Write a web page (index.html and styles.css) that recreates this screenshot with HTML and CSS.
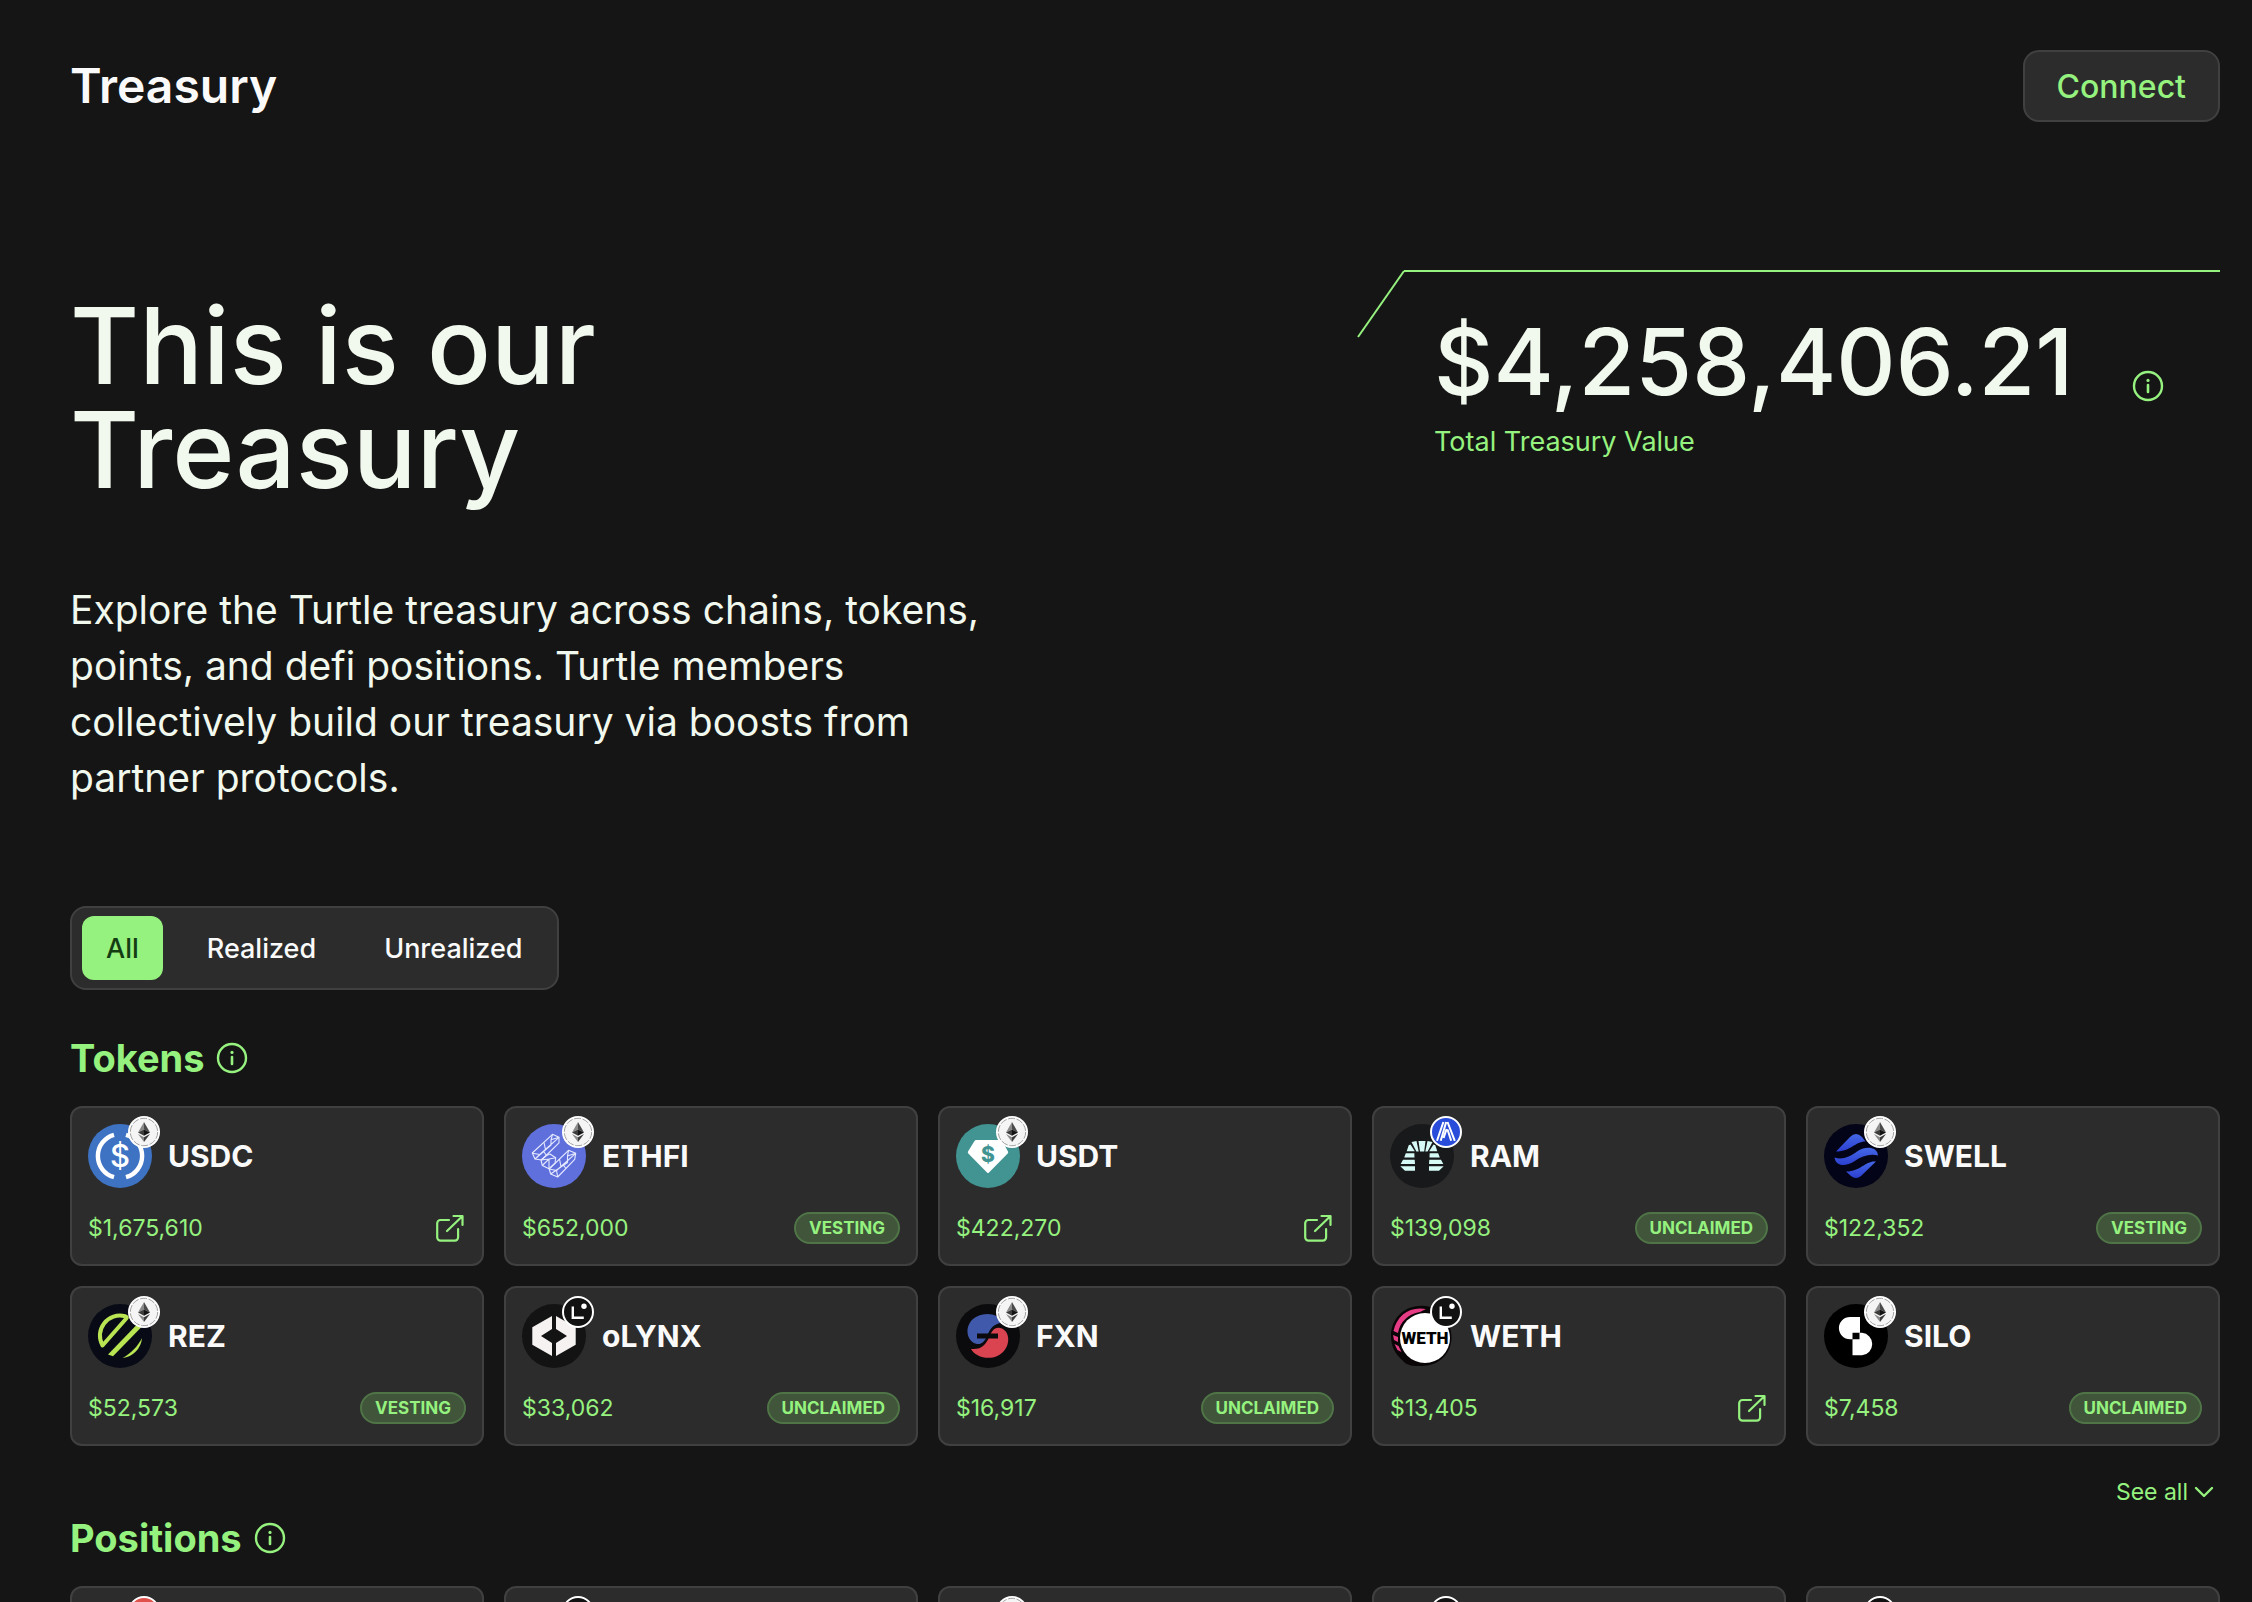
FILE: index.html
```html
<!DOCTYPE html>
<html lang="en">
    <head>
        <meta charset="UTF-8">
        <meta name="viewport" content="width=device-width, initial-scale=1">
        <title>Treasury</title>
        <link rel="stylesheet" href="styles.css">
    </head>
    <body>
        <!-- shared icons -->
        <svg class="sprite" aria-hidden="true">
            <defs>
                <linearGradient id="swell-fill" x1="0" y1="0" x2="0" y2="1">
                    <stop offset="0" stop-color="#4468e6"/>
                    <stop offset="1" stop-color="#2c3fd0"/>
                </linearGradient>
            </defs>
            <symbol id="info" viewBox="0 0 36 36">
                <circle cx="18" cy="18" r="14" fill="none" stroke="currentColor" stroke-width="2.4"/>
                <path d="M18 17v7" stroke="currentColor" stroke-width="2.6" stroke-linecap="round"/>
                <circle cx="18" cy="12.4" r="1.6" fill="currentColor"/>
            </symbol>
            <symbol id="external" viewBox="0 0 32 32">
                <path d="M15 8H6.5A3.3 3.3 0 0 0 3.2 11.3v14a3.3 3.3 0 0 0 3.3 3.3h14.3a3.3 3.3 0 0 0 3.3-3.3V17M13 19 28.3 4.2M19.5 4h9v9" fill="none" stroke="currentColor" stroke-width="2.2" stroke-linecap="round" stroke-linejoin="round"/>
            </symbol>
            <symbol id="chevron" viewBox="0 0 24 24">
                <path d="M4 8l8 8 8-8" fill="none" stroke="currentColor" stroke-width="2.4" stroke-linecap="round" stroke-linejoin="round"/>
            </symbol>
            <!-- chains -->
            <symbol id="eth" viewBox="0 0 32 32">
                <circle cx="16" cy="16" r="16" fill="#fff"/>
                <circle cx="16" cy="16" r="13.7" fill="#f5f5f5" stroke="#8c8c8c" stroke-width=".8" stroke-dasharray="7 1.6"/>
                <path d="M16 6v7.6l-6 2.9z" fill="#8a8a8a"/>
                <path d="M16 6v7.6l6 2.9z" fill="#4a4a4a"/>
                <path d="M16 13.6v6.2l-6-3.3z" fill="#3c3c3b"/>
                <path d="M16 13.6v6.2l6-3.3z" fill="#141414"/>
                <path d="M16 21.2V26l-6-8z" fill="#8a8a8a"/>
                <path d="M16 21.2V26l6-8z" fill="#3c3c3b"/>
            </symbol>
            <symbol id="linea" viewBox="0 0 32 32">
                <circle cx="16" cy="16" r="15" fill="#121212" stroke="#fff" stroke-width="2"/>
                <polyline points="10.8,10.5 10.8,21.8 21.8,21.8" fill="none" stroke="#fff" stroke-width="2.4"/>
                <circle cx="22" cy="10.3" r="2.7" fill="#fff"/>
            </symbol>
            <symbol id="arbitrum" viewBox="0 0 32 32">
                <circle cx="16" cy="16" r="15" fill="#2a4cdb" stroke="#fff" stroke-width="2"/>
                <path d="M13.4 6 7 24.8M16.2 6l-5.5 18.8M16.6 13l-3 9M17.5 6l7.3 18.8M17.5 13.5l3.7 11.3" fill="none" stroke="#fff" stroke-width="2"/>
            </symbol>
            <symbol id="optimism" viewBox="0 0 32 32">
                <circle cx="16" cy="16" r="15" fill="#e0514c" stroke="#fff" stroke-width="2"/>
            </symbol>
        </svg>

        <div class="page">
            <header class="topbar">
                <div class="topbar-title">Treasury</div>
                <button type="button" class="connect">Connect</button>
            </header>

            <section class="hero">
                <div class="intro">
                    <h1>This is our<br>Treasury</h1>
                    <p>Explore the Turtle treasury across chains, tokens, points, and defi positions. Turtle members collectively build our treasury via boosts from partner protocols.</p>
                </div>
                <div class="stats">
                    <svg class="stats-corner" viewBox="0 0 44 68" aria-hidden="true">
                        <path d="M-2 67 44 1" fill="none" stroke="currentColor" stroke-width="2"/>
                    </svg>
                    <div class="stats-body">
                        <div class="stats-row">
                            <div class="stats-value">$4,258,406.21</div>
                            <svg class="info"><use href="#info"/></svg>
                        </div>
                        <div class="stats-label">Total Treasury Value</div>
                    </div>
                </div>
            </section>

            <div class="tabs">
                <button type="button" class="tab on">All</button>
                <button type="button" class="tab">Realized</button>
                <button type="button" class="tab">Unrealized</button>
            </div>

            <section class="group">
                <div class="group-hd">
                    <h2>Tokens</h2>
                    <svg class="info"><use href="#info"/></svg>
                </div>
                <div class="cards">
                    <div class="card">
                        <div class="card-hd">
                            <div class="coin">
                                <svg class="coin-img" viewBox="0 0 64 64">
                                    <circle cx="32" cy="32" r="32" fill="#3e73c4"/>
                                    <path d="M26 10.8a22 22 0 0 0 0 42.400M38 10.8a22 22 0 0 1 0 42.400" fill="none" stroke="#fff" stroke-width="4.400"/>
                                    <text x="32" y="43" class="coin-sign" font-size="31" fill="#fff">$</text>
                                </svg>
                                <svg class="chain"><use href="#eth"/></svg>
                            </div>
                            <h3>USDC</h3>
                        </div>
                        <div class="card-ft">
                            <span class="amount">$1,675,610</span>
                            <a href="#" class="external" aria-label="Open USDC"><svg><use href="#external"/></svg></a>
                        </div>
                    </div>
                    <div class="card">
                        <div class="card-hd">
                            <div class="coin">
                                <svg class="coin-img" viewBox="0 0 64 64">
                                    <circle cx="32" cy="32" r="32" fill="#5f70dd"/>
                                    <g fill="none" stroke="#e6eaff" stroke-width="1.1" stroke-linejoin="round">
                                        <path d="M30.5 10.3l6.500 3v5.500L19.500 36l-6.500-1-2.700-6z"/>
                                        <path d="M30.500 10.300l-1.500 5.500 8-2.500M29 15.800V21L13 35M10.300 29.300l7.500 1.200L37 13.300M17.800 30.500L13 35M22 18.500l1.500 7M22 28l2.500 3.500"/>
                                        <path d="M24.500 31.500L28 30l5.700 3.700-.7 5.500-6 5.500-6.700-3.200L19 36z"/>
                                        <path d="M19 36l8-1 6.700-1.300M27 35v9.700M20.300 41.500L27 35"/>
                                        <path d="M46.500 26.300l7.200 3-1 6L35.700 53l-7-3-1.500-5z"/>
                                        <path d="M46.500 26.300L45.500 32l8.200-2.700M45.500 32v6.500L28.700 50M27.200 45l7.300 1.500L53.700 29.300M34.500 46.500l1.200 6.500M37.500 35l1.500 8M41 40.500l3 4"/>
                                    </g>
                                </svg>
                                <svg class="chain"><use href="#eth"/></svg>
                            </div>
                            <h3>ETHFI</h3>
                        </div>
                        <div class="card-ft">
                            <span class="amount">$652,000</span>
                            <span class="tag">VESTING</span>
                        </div>
                    </div>
                    <div class="card">
                        <div class="card-hd">
                            <div class="coin">
                                <svg class="coin-img" viewBox="0 0 64 64">
                                    <circle cx="32" cy="32" r="32" fill="#429492"/>
                                    <path d="M20.5 16h24a2 2 0 0 1 1.700 1L52 27.600a1.500 1.500 0 0 1-.3 1.800L33 48.500a1.400 1.400 0 0 1-2 0L12.300 29.400a1.500 1.500 0 0 1-.3-1.800L18.500 17a2 2 0 0 1 2-1z" fill="#fff"/>
                                    <text x="32" y="38" class="coin-sign coin-bold" font-size="21" fill="#429492">$</text>
                                </svg>
                                <svg class="chain"><use href="#eth"/></svg>
                            </div>
                            <h3>USDT</h3>
                        </div>
                        <div class="card-ft">
                            <span class="amount">$422,270</span>
                            <a href="#" class="external" aria-label="Open USDT"><svg><use href="#external"/></svg></a>
                        </div>
                    </div>
                    <div class="card">
                        <div class="card-hd">
                            <div class="coin">
                                <svg class="coin-img" viewBox="0 0 64 64">
                                    <circle cx="32" cy="32" r="32" fill="#17191a"/>
                                    <g fill="#d6faf6">
                                        <path d="M28.500 17h7l-1.300 10.500H30z"/>
                                        <path d="M21.500 18l5-1 2.200 10.500h-2.300zM16.700 27.300l2-6 1.800-.8 4.300 6.800zM14.200 33.500l1.600-4.200h8.500l.2 4.200zM10.700 40l2.300-4.300h11.700l.3 4.300zM10.300 42.200H25v4.500H15z"/>
                                        <path transform="matrix(-1 0 0 1 64 0)" d="M21.500 18l5-1 2.200 10.500h-2.300zM16.700 27.300l2-6 1.800-.8 4.300 6.800zM14.200 33.500l1.600-4.200h8.500l.2 4.200zM10.700 40l2.300-4.300h11.700l.3 4.300zM10.300 42.200H25v4.500H15z"/>
                                    </g>
                                </svg>
                                <svg class="chain"><use href="#arbitrum"/></svg>
                            </div>
                            <h3>RAM</h3>
                        </div>
                        <div class="card-ft">
                            <span class="amount">$139,098</span>
                            <span class="tag">UNCLAIMED</span>
                        </div>
                    </div>
                    <div class="card">
                        <div class="card-hd">
                            <div class="coin">
                                <svg class="coin-img" viewBox="0 0 64 64">
                                    <circle cx="32" cy="32" r="32" fill="#030417"/>
                                    <g fill="url(#swell-fill)">
                                        <path d="M12 27.500 26 13q6-6 12 0l3.500 4.500C31 17.500 27 27.500 12 27.500z"/>
                                        <path d="M54 31.500C53.500 22 40 22 33 27.500 26 33 18 36 10.500 33.500 12 43 22 42.500 30 37.500 38 32 46 29.500 54 31.500z"/>
                                        <path d="M52 37.500C41 36.500 38 47 22 47.500l5 4.500q5 4 10 0z"/>
                                    </g>
                                </svg>
                                <svg class="chain"><use href="#eth"/></svg>
                            </div>
                            <h3>SWELL</h3>
                        </div>
                        <div class="card-ft">
                            <span class="amount">$122,352</span>
                            <span class="tag">VESTING</span>
                        </div>
                    </div>
                    <div class="card">
                        <div class="card-hd">
                            <div class="coin">
                                <svg class="coin-img" viewBox="0 0 64 64">
                                    <circle cx="32" cy="32" r="32" fill="#080a16"/>
                                    <path d="M14.500 41.500A20 20 0 0 1 37 12.300q2.500.7 1.500 2z" fill="none" stroke="#b9e553" stroke-width="4" stroke-linejoin="round"/>
                                    <path d="M20 50.500 49 20.500l4.500 2.500L25 52.200z" fill="#b9e553"/>
                                    <path d="M54 34A22 22 0 0 1 34.500 54C43 49.500 50 42 54 34z" fill="#b9e553"/>
                                </svg>
                                <svg class="chain"><use href="#eth"/></svg>
                            </div>
                            <h3>REZ</h3>
                        </div>
                        <div class="card-ft">
                            <span class="amount">$52,573</span>
                            <span class="tag">VESTING</span>
                        </div>
                    </div>
                    <div class="card">
                        <div class="card-hd">
                            <div class="coin">
                                <svg class="coin-img" viewBox="0 0 64 64">
                                    <circle cx="32" cy="32" r="32" fill="#131313"/>
                                    <path d="M30 12v13l-11 7 11 7v13L10.300 40.700V23.300zM34 12v13l11 7-11 7v13l19.700-11.300V23.300z" fill="#f7f2f2"/>
                                </svg>
                                <svg class="chain"><use href="#linea"/></svg>
                            </div>
                            <h3>oLYNX</h3>
                        </div>
                        <div class="card-ft">
                            <span class="amount">$33,062</span>
                            <span class="tag">UNCLAIMED</span>
                        </div>
                    </div>
                    <div class="card">
                        <div class="card-hd">
                            <div class="coin">
                                <svg class="coin-img" viewBox="0 0 64 64">
                                    <circle cx="32" cy="32" r="32" fill="#0b0b0d"/>
                                    <path d="M21 40C7 37 7 11 31 10c9 0 15 4.500 17 9-10-1-14 6-17 13-2 5-5 8.500-10 8z" fill="#4159aa"/>
                                    <path d="M44 24C56 26 56 49 37 53.500 27 55 18 51 15 45c11 1 15-5 18-11.500C36 27 38 23 44 24z" fill="#da4350"/>
                                    <path d="M21 29.500h21v5H21z" fill="#0b0b0d"/>
                                </svg>
                                <svg class="chain"><use href="#eth"/></svg>
                            </div>
                            <h3>FXN</h3>
                        </div>
                        <div class="card-ft">
                            <span class="amount">$16,917</span>
                            <span class="tag">UNCLAIMED</span>
                        </div>
                    </div>
                    <div class="card">
                        <div class="card-hd">
                            <div class="coin">
                                <svg class="coin-img" viewBox="0 0 64 64">
                                    <path d="M29 2C50 0 62 18 61.500 34 61 51 48 62 32 62c-9 0-14 0-19-5C5 50 1 42 1 32 1 16 12 3 29 2z" fill="#0a0608"/>
                                    <path d="M3.500 27C7 11 20 2 36 5L30 8C18 10 10 18 8 29zM3 31l5 2v5l-4-2zM4.500 40l4 2 3 6-4-2z" fill="#e63c86"/>
                                    <circle cx="35" cy="34" r="25" fill="#fff"/>
                                    <text x="35" y="40" class="coin-word" font-size="17">WETH</text>
                                </svg>
                                <svg class="chain"><use href="#linea"/></svg>
                            </div>
                            <h3>WETH</h3>
                        </div>
                        <div class="card-ft">
                            <span class="amount">$13,405</span>
                            <a href="#" class="external" aria-label="Open WETH"><svg><use href="#external"/></svg></a>
                        </div>
                    </div>
                    <div class="card">
                        <div class="card-hd">
                            <div class="coin">
                                <svg class="coin-img" viewBox="0 0 64 64">
                                    <circle cx="32" cy="32" r="32" fill="#000"/>
                                    <path d="M36 13H26a11 11 0 0 0 0 22.200h2.500v-6.400H36z" fill="#fff"/>
                                    <path d="M28.500 51.300H38a11.300 11.300 0 0 0 0-22.500h-2.500v6.400h-7z" fill="#fff"/>
                                </svg>
                                <svg class="chain"><use href="#eth"/></svg>
                            </div>
                            <h3>SILO</h3>
                        </div>
                        <div class="card-ft">
                            <span class="amount">$7,458</span>
                            <span class="tag">UNCLAIMED</span>
                        </div>
                    </div>
                </div>
                <div class="more">
                    <button type="button" class="see-all">See all<svg><use href="#chevron"/></svg></button>
                </div>
            </section>

            <section class="group">
                <div class="group-hd">
                    <h2>Positions</h2>
                    <svg class="info"><use href="#info"/></svg>
                </div>
                <div class="cards">
                    <div class="card"><div class="card-hd"><div class="coin"><svg class="chain"><use href="#optimism"/></svg></div></div></div>
                    <div class="card"><div class="card-hd"><div class="coin"><svg class="chain"><use href="#linea"/></svg></div></div></div>
                    <div class="card"><div class="card-hd"><div class="coin"><svg class="chain"><use href="#eth"/></svg></div></div></div>
                    <div class="card"><div class="card-hd"><div class="coin"><svg class="chain"><use href="#linea"/></svg></div></div></div>
                    <div class="card"><div class="card-hd"><div class="coin"><svg class="chain"><use href="#linea"/></svg></div></div></div>
                </div>
            </section>
        </div>
    </body>
</html>
```
FILE: styles.css
```css
* {
    box-sizing: border-box;
}
html {
    scrollbar-width: none;
}
body {
    margin: 0;
    background: #151515;
    color: #fafafa;
    font-family: Inter, "Liberation Sans", sans-serif;
}
h1, h2, h3, p {
    margin: 0;
}
button {
    font-family: inherit;
    cursor: pointer;
}
svg {
    display: block;
}
.sprite {
    position: absolute;
    width: 0;
    height: 0;
}
.page {
    padding: 50px 32px 50px 70px;
}

/* header */
.topbar {
    display: flex;
    justify-content: space-between;
    align-items: center;
}
.topbar-title {
    font-size: 48px;
    line-height: 72px;
    font-weight: 600;
}
.connect {
    height: 72px;
    padding: 0 32px;
    border: 2px solid #404040;
    border-radius: 16px;
    background: #2c2c2c;
    color: #96f27f;
    font-size: 32px;
    font-weight: 500;
}

/* hero */
.hero {
    display: flex;
    justify-content: space-between;
    align-items: flex-start;
    margin-top: 148px;
    color: #f1f8ed;
}
.intro {
    padding-top: 24px;
}
.intro h1 {
    font-size: 106px;
    line-height: 104px;
    font-weight: 500;
}
.intro p {
    max-width: 940px;
    margin-top: 80px;
    font-size: 39px;
    line-height: 56px;
}
.stats {
    display: flex;
    width: 40%;
}
.stats-corner {
    width: 44px;
    height: 68px;
    overflow: visible;
    color: #96f27f;
}
.stats-body {
    flex: 1;
    padding: 42px 54px 0 30px;
    border-top: 2px solid #96f27f;
}
.stats-row {
    display: flex;
    justify-content: space-between;
    align-items: flex-end;
}
.stats-value {
    font-size: 92px;
    line-height: 96px;
    font-weight: 500;
}
.stats-row .info {
    margin-bottom: 6px;
}
.stats-label {
    margin-top: 12px;
    color: #96f27f;
    font-size: 27px;
    line-height: 40px;
}
.info {
    width: 36px;
    height: 36px;
    color: #96f27f;
}

/* tabs */
.tabs {
    display: inline-flex;
    gap: 20px;
    margin-top: 100px;
    padding: 8px 10px;
    border: 2px solid #404040;
    border-radius: 16px;
    background: #2c2c2c;
}
.tab {
    height: 64px;
    padding: 0 24px;
    border: 0;
    border-radius: 12px;
    background: none;
    color: #fafafa;
    font-size: 27px;
    font-weight: 500;
}
.tab.on {
    background: #96f27f;
    color: #143d12;
}

/* groups */
.group {
    margin-top: 40px;
}
.group + .group {
    margin-top: 0;
}
.group-hd {
    display: flex;
    align-items: center;
    gap: 10px;
    margin-bottom: 20px;
}
.group-hd h2 {
    color: #96f27f;
    font-size: 38px;
    line-height: 56px;
    font-weight: 700;
}
.cards {
    display: grid;
    grid-template-columns: repeat(5, 1fr);
    gap: 20px;
}
.card {
    min-height: 160px;
    padding: 16px;
    border: 2px solid #404040;
    border-radius: 12px;
    background: #2c2c2c;
}
.card-hd {
    display: flex;
    align-items: center;
    gap: 16px;
}
.card-hd h3 {
    font-size: 30px;
    line-height: 40px;
    font-weight: 700;
}
.coin {
    position: relative;
    width: 64px;
    height: 64px;
}
.coin-img {
    width: 64px;
    height: 64px;
}
.chain {
    position: absolute;
    top: -8px;
    right: -8px;
    width: 32px;
    height: 32px;
}
.coin-sign {
    font-family: Inter, sans-serif;
    font-weight: 500;
    text-anchor: middle;
}
.coin-bold {
    font-weight: 800;
}
.coin-word {
    font-family: Roboto, sans-serif;
    font-weight: 900;
    text-anchor: middle;
}
.card-ft {
    display: flex;
    justify-content: space-between;
    align-items: flex-start;
    margin-top: 24px;
}
.amount {
    color: #96f27f;
    font-size: 23px;
    line-height: 32px;
}
.external {
    color: #96f27f;
}
.external svg {
    width: 32px;
    height: 32px;
}
.tag {
    padding: 0 13px;
    border: 2px solid #4f7547;
    border-radius: 16px;
    background: #40553a;
    color: #96f27f;
    font-size: 17px;
    line-height: 28px;
    font-weight: 700;
}
.more {
    display: flex;
    justify-content: flex-end;
    margin-top: 28px;
}
.see-all {
    display: flex;
    align-items: center;
    gap: 4px;
    padding: 0 4px;
    border: 0;
    background: none;
    color: #96f27f;
    font-size: 23px;
    line-height: 36px;
}
.see-all svg {
    width: 24px;
    height: 24px;
}
```
